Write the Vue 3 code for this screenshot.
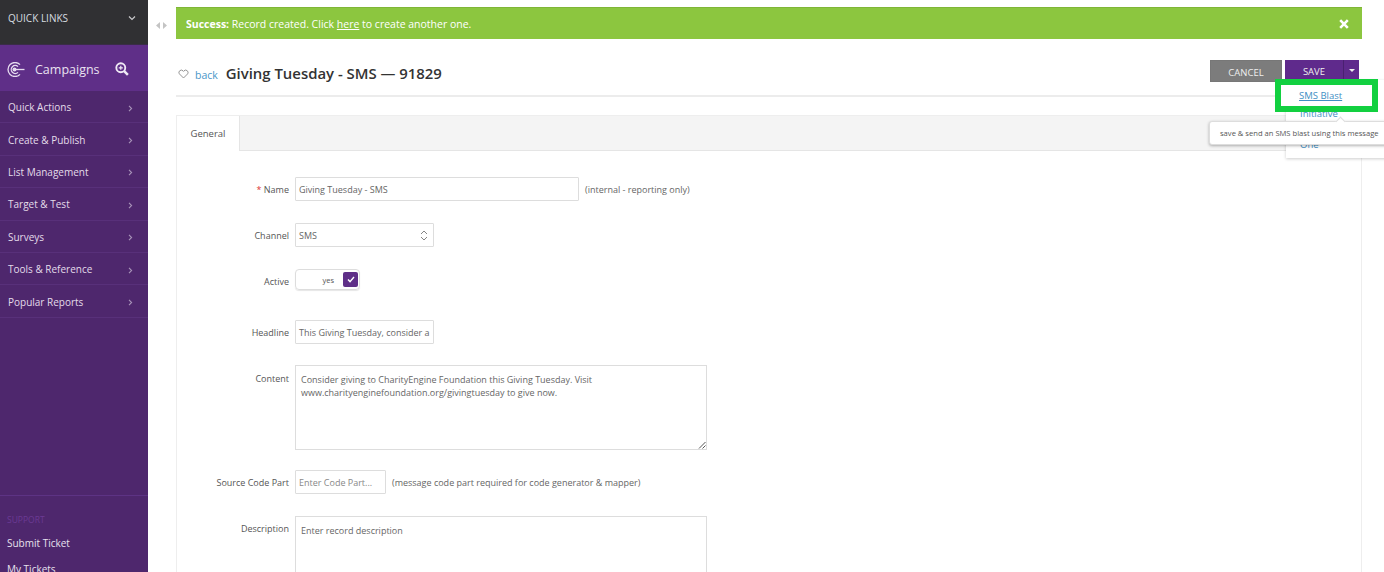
<script setup>
const menu = ['Quick Actions', 'Create & Publish', 'List Management', 'Target & Test', 'Surveys', 'Tools & Reference', 'Popular Reports']
</script>

<template>
  <div class="page">
    <aside class="sidebar">
      <div class="quick"><span>QUICK LINKS</span>
        <svg width="8" height="6" viewBox="0 0 8 6"><path d="M1 1.5l3 3 3-3" fill="none" stroke="#c9c9cc" stroke-width="1.2"/></svg>
      </div>
      <div class="campaigns">
        <svg class="target" width="18" height="15" viewBox="0 0 18 15" fill="none" stroke="#e6dcef">
          <path d="M13 2.6A7 7 0 1 0 13 12.4" stroke-width="1.3"/>
          <path d="M11 4.6A4 4 0 1 0 11 10.4" stroke-width="1.3"/>
          <circle cx="7.5" cy="7.5" r="2" fill="#e6dcef" stroke="none"/>
          <path d="M7.5 7.5h10" stroke-width="1.3"/>
        </svg>
        <span class="camp-title">Campaigns</span>
        <svg class="zoomi" width="14" height="14" viewBox="0 0 15 15" fill="none" stroke="#f0eaf5">
          <circle cx="6.2" cy="6.2" r="4.8" stroke-width="2"/>
          <path d="M9.8 9.8l4 4" stroke-width="2.6"/>
          <path d="M4 6.2h4.4M6.2 4v4.4" stroke-width="1.3"/>
        </svg>
      </div>
      <nav class="menu">
        <a v-for="m in menu" :key="m" class="item"><span>{{ m }}</span>
          <svg width="5" height="7" viewBox="0 0 5 7"><path d="M1 .8l2.6 2.7L1 6.2" fill="none" stroke="#a793b8" stroke-width="1.1"/></svg>
        </a>
      </nav>
      <div class="support">
        <div class="support-h">SUPPORT</div>
        <a>Submit Ticket</a>
        <a>My Tickets</a>
      </div>
    </aside>

    <div class="gutter">
      <svg width="11" height="7" viewBox="0 0 11 7"><path d="M4 0v7L0 3.5zM7 0v7l4-3.5z" fill="#c4c4c4"/></svg>
    </div>

    <main class="main">
      <div class="alert">
        <span><b>Success:</b> Record created. Click <u>here</u> to create another one.</span>
        <svg width="10" height="10" viewBox="0 0 10 10"><path d="M1.2 1.2l7.6 7.6M8.8 1.2L1.2 8.8" stroke="#fff" stroke-width="2.6"/></svg>
      </div>

      <header class="head">
        <svg class="heart" width="11" height="10" viewBox="0 0 11 10"><path d="M5.5 9L1.3 4.8A2.4 2.4 0 0 1 5 1.8l.5.6.5-.6a2.4 2.4 0 0 1 3.7 3z" fill="none" stroke="#8a8a8a" stroke-width=".9"/></svg>
        <a class="back">back</a>
        <h1>Giving Tuesday - SMS — 91829</h1>
        <div class="actions">
          <button class="cancel">CANCEL</button>
          <div class="save"><span class="save-l">SAVE</span><span class="save-c"><i></i></span></div>
        </div>
      </header>

      <section class="panel">
        <div class="tabs"><div class="tab">General</div></div>
        <div class="form">
          <label class="l l-name"><em>*</em> Name</label>
          <div class="row"><div class="input w-name">Giving Tuesday - SMS</div><span class="hint">(internal - reporting only)</span></div>

          <label class="l l-channel">Channel</label>
          <div class="row"><div class="input w-channel">SMS
            <svg width="8" height="11" viewBox="0 0 8 11"><path d="M1 4l3-3 3 3M1 7l3 3 3-3" fill="none" stroke="#777" stroke-width=".9"/></svg>
          </div></div>

          <label class="l l-active">Active</label>
          <div class="row"><div class="toggle"><span>yes</span><b>
            <svg width="8" height="7" viewBox="0 0 8 7"><path d="M1 3.6l2 2L7 1" fill="none" stroke="#fff" stroke-width="1.4"/></svg>
          </b></div></div>

          <label class="l l-head">Headline</label>
          <div class="row"><div class="input w-channel">This Giving Tuesday, consider a</div></div>

          <label class="l l-content">Content</label>
          <div class="row"><div class="area a-content">Consider giving to CharityEngine Foundation this Giving Tuesday. Visit<br>www.charityenginefoundation.org/givingtuesday to give now.
            <svg class="grip" width="8" height="8" viewBox="0 0 8 8"><path d="M1 7.5L7.5 1M4.5 7.5l3-3" stroke="#555" stroke-width="1"/></svg>
          </div></div>

          <label class="l l-src">Source Code Part</label>
          <div class="row"><div class="input w-src ph">Enter Code Part...</div><span class="hint">(message code part required for code generator &amp; mapper)</span></div>

          <label class="l l-desc">Description</label>
          <div class="row"><div class="area a-desc ph">Enter record description</div></div>
        </div>
      </section>
    </main>

    <div class="dropdown">
      <a class="dd2">Initiative</a>
      <a class="dd3">One</a>
    </div>
    <div class="highlight"><a>SMS Blast</a></div>
    <div class="tooltip"><i></i>save &amp; send an SMS blast using this message</div>
  </div>
</template>

<style>
html, body { margin: 0; overflow: hidden; background: #fff; }
</style>

<style scoped>
.page { position: relative; display: flex; width: 1384px; height: 572px; overflow: hidden; background: #fff; font-family: "Open Sans", sans-serif; font-size: 9px; color: #555; }
.sidebar { width: 148px; flex: none; height: 572px; overflow: hidden; background: #4e276d; display: flex; flex-direction: column; position: relative; }
.quick { height: 45px; flex: none; background: #303033; border-bottom: 1px solid #3a2c48; box-sizing: border-box; display: flex; align-items: center; justify-content: space-between; padding: 0 12px 8px 8px; color: #d7dde0; font-size: 10px; }
.campaigns { height: 46px; flex: none; box-sizing: border-box; padding-top: 2px; background: #5f2f88; display: flex; align-items: center; color: #e9e2f0; }
.target { margin-left: 7px; }
.camp-title { margin-left: 10px; font-size: 12.5px; width: 80px; }
.menu { display: flex; flex-direction: column; }
.item { height: 32.4px; box-sizing: border-box; border-bottom: 1px solid #58307a; display: flex; align-items: center; justify-content: space-between; padding: 1px 15px 0 8px; color: #e4dcea; font-size: 10px; }
.item svg { margin-top: 2px; }
.support { margin-top: auto; height: 77px; flex: none; box-sizing: border-box; border-top: 1px solid #5d3384; padding: 18px 0 0 7px; display: flex; flex-direction: column; color: #e8e2ee; font-size: 10px; }
.support-h { color: #6b3a94; font-size: 8.5px; height: 12px; line-height: 12px; margin-bottom: 10px; }
.support a { height: 26px; flex: none; line-height: 14px; }
.gutter { width: 28px; flex: none; display: flex; justify-content: center; padding-top: 22px; box-sizing: border-box; padding-right: 2px; }
.gutter svg { display: block; }
.main { width: 1186px; flex: none; padding-top: 7px; }
.alert { height: 32px; background: #8cc63f; border-top: 1px solid #7fb636; box-sizing: border-box; display: flex; align-items: center; justify-content: space-between; padding: 0 13px 0 10px; color: #fff; font-size: 10.5px; }
.alert b { font-weight: 700; }
.head { height: 58px; box-sizing: border-box; border-bottom: 2px solid #ececec; display: flex; align-items: center; padding: 13px 3px 0 2px; }
.heart { margin-top: 1px; }
.back { color: #4a97c9; font-size: 10.5px; margin-left: 6px; margin-top: 2px; }
h1 { margin: -2px 0 0 8px; font-size: 14.9px; font-weight: 600; color: #333; }
.actions { margin-left: auto; display: flex; gap: 3px; margin-top: -5px; }
.cancel { width: 72px; height: 22px; padding: 2px 0 0; border: 1px solid #777; background: #7c7c7c; color: #eee; font-family: inherit; font-size: 9.5px; }
.save { display: flex; height: 21px; background: #5f2a8c; color: #eee; font-size: 9.5px; margin-bottom: 1px; }
.save-l { width: 58px; display: flex; align-items: center; justify-content: center; padding-top: 2px; }
.save-c { width: 16px; box-sizing: border-box; border-left: 1px solid #4a2070; display: flex; align-items: center; justify-content: center; }
.save-c i { border: 3px solid transparent; border-top-color: #eee; border-bottom: 0; }
.panel { margin-top: 18px; height: 480px; box-sizing: border-box; border: 1px solid #eee; border-bottom: 0; }
.tabs { height: 35px; background: #f4f4f4; border-bottom: 1px solid #e5e5e5; box-sizing: border-box; }
.tab { width: 63px; height: 35px; box-sizing: border-box; background: #fff; border-right: 1px solid #e5e5e5; display: flex; align-items: center; justify-content: center; color: #555; font-size: 9.5px; }
.form { display: grid; grid-template-columns: 112px 1fr; column-gap: 6px; padding-top: 26px; }
.l { text-align: right; height: 24px; line-height: 25px; margin-bottom: 22px; color: #555; }
.l em { color: #d33; font-style: normal; }
.l-active { height: 21px; margin-bottom: 30px; line-height: 25px; }
.l-head { margin-bottom: 21px; }
.l-content { height: 85px; margin-bottom: 20px; line-height: 28px; }
.row { display: flex; align-items: flex-start; min-width: 0; }
.input { height: 24px; box-sizing: border-box; border: 1px solid #ddd; display: flex; align-items: center; padding: 0 3px; color: #666; background: #fff; white-space: nowrap; border-radius: 1px; }
.w-name { width: 284px; }
.w-channel { width: 139px; justify-content: space-between; padding-right: 5px; }
.w-src { width: 91px; }
.ph { color: #888; }
.hint { margin: 6px 0 0 6px; color: #666; }
.toggle { width: 65px; height: 21px; box-sizing: border-box; border: 1px solid #ddd; border-radius: 4px; display: flex; align-items: center; justify-content: flex-end; padding-right: 1px; font-size: 7.5px; color: #555; box-shadow: 0 1px 1px rgba(0,0,0,.1); }
.toggle span { margin-right: 9px; }
.toggle b { width: 15px; height: 15px; background: #5f2f88; border-radius: 2px; display: flex; align-items: center; justify-content: center; }
.area { position: relative; width: 412px; box-sizing: border-box; border: 1px solid #ddd; padding: 7px 5px; line-height: 13px; color: #666; }
.a-content { height: 85px; }
.a-desc { height: 80px; }
.grip { position: absolute; right: 0; bottom: 0; }
.dropdown { position: absolute; left: 1286px; top: 80px; width: 110px; height: 78px; background: #fff; box-shadow: 0 1px 3px rgba(0,0,0,.2); color: #3f8fc4; font-size: 9.5px; }
.dropdown a { position: absolute; left: 14px; }
.dd2 { top: 27px; }
.dd3 { top: 58px; }
.highlight { position: absolute; left: 1275px; top: 79px; width: 103px; height: 33px; box-sizing: border-box; border: 6px solid #12d040; background: #fff; color: #3f8fc4; font-size: 9.5px; }
.highlight a { position: absolute; left: 18px; top: 3.5px; text-decoration: underline; }
.tooltip { position: absolute; left: 1209px; top: 121px; width: 190px; height: 24px; box-sizing: border-box; padding-left: 10px; line-height: 23px; background: #fff; border: 1px solid #ddd; border-radius: 3px; box-shadow: 0 1px 3px rgba(0,0,0,.3); font-size: 7.6px; color: #555; }
.tooltip i { position: absolute; left: 127px; top: -4px; width: 6px; height: 6px; background: #fff; border-left: 1px solid #ddd; border-top: 1px solid #ddd; transform: rotate(45deg); }
</style>
